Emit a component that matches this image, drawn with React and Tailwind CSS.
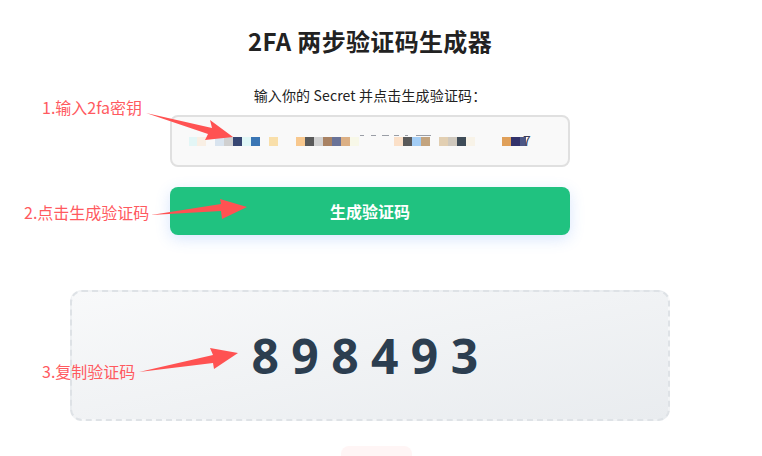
const font = { fontFamily: '"Noto Sans CJK SC", "Noto Sans", sans-serif' };

const blocks = [
  ["#e3f6f6", 8], ["#f9efe4", 9], [null, 9], ["#d9e4ef", 9], ["#d0d0d0", 9], ["#374672", 9], ["#e0f7f7", 9], ["#3a76b5", 9],
  [null, 9], ["#f9dfaa", 9], [null, 18], ["#f8c88e", 9], ["#5a5a5a", 9], ["#d2d2d2", 9], ["#a98263", 9], ["#6a7398", 9],
  ["#dcb085", 9], ["#f8f8e8", 9], [null, 35], ["#fbe0c8", 9], ["#5a5a5a", 9], ["#a3cdf5", 9], ["#c3a47f", 9], [null, 9],
  ["#e2cfb2", 9], ["#cfc8bd", 9], ["#3f4c58", 9], ["#f8f3e8", 9], [null, 27], ["#e0a05a", 9], ["#33326b", 9], ["#4c5786", 6],
];

const dashes = [
  [171, 4], [7, 5], [6, 7], [5, 5], [6, 3], [8, 15],
];

function Arrow({ points }) {
  return <polygon points={points} fill="#ff5252" />;
}

function Note({ className, children }) {
  return <span className={`absolute text-[16px] leading-[24px] text-[#ff5a5f] whitespace-nowrap ${className}`}>{children}</span>;
}

export default function App() {
  return (
    <div className="relative h-[456px] w-[762px] overflow-hidden bg-white" style={font}>
      <div className="flex w-[740px] flex-col items-center">
        <h1 className="mt-[23px] text-[24px] font-bold leading-[36px] tracking-[0.33px] text-[#222222]">2FA 两步验证码生成器</h1>
        <label className="mt-[25px] text-[14px] leading-[22px] tracking-[0.14px] text-[#222222]">输入你的 Secret 并点击生成验证码：</label>
        <div className="mt-[9px] h-[52px] w-[400px] rounded-lg border-2 border-[#e0e0e0] bg-[#f9f9f9] pl-[17px] pt-[18px]">
          <div className="flex h-[1px]">
            {dashes.map(([gap, width], i) => (
              <span key={i} className="h-[1px] bg-[#9a9ea6]" style={{ marginLeft: gap, width }} />
            ))}
          </div>
          <div className="mt-[1px] flex h-[9px]">
            {blocks.map(([color, width], i) => (
              <span key={i} className="h-[9px]" style={{ width, background: color || "transparent" }} />
            ))}
            <span className="-ml-[3px] -mt-[3px] text-[14px] leading-[12px] text-[#3a3f5c]">7</span>
          </div>
        </div>
        <button className="mt-[20px] h-[48px] w-[400px] rounded-lg bg-[#20c280] text-[16px] font-bold text-white shadow-[0_4px_15px_rgba(59,130,246,0.2)]">生成验证码</button>
        <div className="mt-[55px] flex h-[131px] w-[600px] items-center justify-center rounded-xl border-2 border-dashed border-[#dee2e6] bg-gradient-to-br from-[#f8f9fa] to-[#e9ecef]">
          <span className="pl-[2px] text-[48px] font-bold leading-[60px] tracking-[12.4px] text-[#2c3e50]" style={{ fontFamily: '"Noto Sans", sans-serif' }}>898493</span>
        </div>
        <div className="ml-[12px] mt-[25px] h-[30px] w-[71px] rounded-lg bg-[#fff5f5]" />
      </div>

      <Note className="left-[42px] top-[95px]">1.输入2fa密钥</Note>
      <Note className="left-[24px] top-[200px]">2.点击生成验证码</Note>
      <Note className="left-[42px] top-[359px]">3.复制验证码</Note>
      <svg className="absolute left-0 top-0" width="762" height="456" viewBox="0 0 762 456">
        <Arrow points="146,113 212,128 210,120 233,137 205,140 208,134" />
        <Arrow points="151,215 221,204 220,199 247,207 222,219 221,211" />
        <Arrow points="139,372 213,355 210,348 238,353 214,369 213,363" />
      </svg>
    </div>
  );
}
